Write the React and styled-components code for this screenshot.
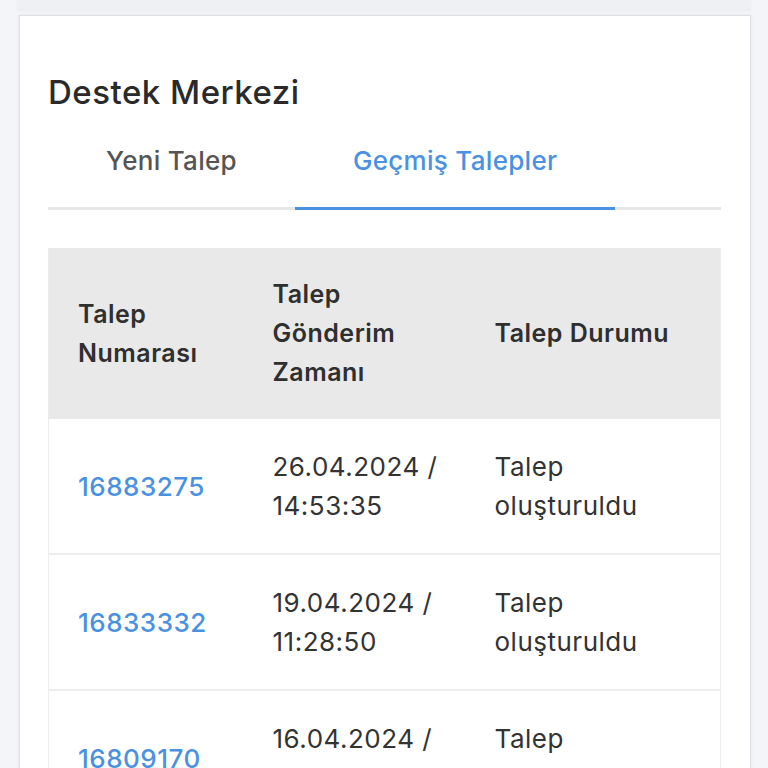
import styled, { createGlobalStyle } from 'styled-components'

const tickets = [
	{ id: '16883275', date: '26.04.2024 /', time: '14:53:35', status: 'Talep', status2: 'oluşturuldu' },
	{ id: '16833332', date: '19.04.2024 /', time: '11:28:50', status: 'Talep', status2: 'oluşturuldu' },
	{ id: '16809170', date: '16.04.2024 /', time: '10:12:44', status: 'Talep', status2: 'oluşturuldu' },
]

const App = () => {
	return (
		<Page>
			<GlobalStyle />
			<PrevCard />
			<Card>
				<Title>Destek Merkezi</Title>
				<Tabs>
					<Tab>Yeni Talep</Tab>
					<Tab $active>Geçmiş Talepler</Tab>
				</Tabs>
				<Table>
					<colgroup>
						<col style={{ width: 195 }} />
						<col style={{ width: 222 }} />
						<col />
					</colgroup>
					<thead>
						<tr>
							<HeadCell>
								Talep
								<br />
								Numarası
							</HeadCell>
							<HeadCell>
								Talep
								<br />
								Gönderim
								<br />
								Zamanı
							</HeadCell>
							<HeadCell>Talep Durumu</HeadCell>
						</tr>
					</thead>
					<tbody>
						{tickets.map((t) => (
							<Row key={t.id}>
								<Cell>
									<TicketLink>{t.id}</TicketLink>
								</Cell>
								<Cell>
									{t.date}
									<br />
									{t.time}
								</Cell>
								<Cell>
									{t.status}
									<br />
									{t.status2}
								</Cell>
							</Row>
						))}
					</tbody>
				</Table>
			</Card>
		</Page>
	)
}

export default App

const GlobalStyle = createGlobalStyle`
	html, body {
		margin: 0;
		padding: 0;
		background: #f3f5f9;
		font-family: Inter, "Noto Sans", sans-serif;
	}
	body {
		height: 768px;
		overflow: hidden;
	}
`

const Page = styled.div`
	display: flex;
	flex-direction: column;
	gap: 6px;
	padding: 0 17px 0 19px;
`

const PrevCard = styled.div`
	height: 9px;
	margin: 0 0 0 -2px;
	background: #eef0f4;
	box-shadow: 0 2px 3px rgba(0, 0, 0, 0.04);
`

const Card = styled.div`
	background: #fff;
	border: 1.5px solid #dedfe4;
	box-shadow: 0 0 4px rgba(0, 0, 0, 0.06);
	padding: 60px 29px 0 28px;
	min-height: 800px;
`

const Title = styled.h1`
	margin: 0;
	font-size: 33px;
	font-weight: 500;
	line-height: 32px;
	color: #2a2a2a;
	letter-spacing: 0.5px;
`

const Tabs = styled.div`
	display: flex;
	margin-top: 25px;
	border-bottom: 3px solid #e7e7e7;
`

const Tab = styled.div`
	padding: 12px 58px 30px 58px;
	margin-bottom: -3px;
	font-size: 26px;
	font-weight: 500;
	line-height: 32px;
	letter-spacing: 0.3px;
	color: ${(p) => (p.$active ? '#4a92e1' : '#555')};
	border-bottom: 3px solid ${(p) => (p.$active ? '#4a92e1' : 'transparent')};
`

const Table = styled.table`
	width: 100%;
	margin-top: 38px;
	border-collapse: collapse;
	table-layout: fixed;
	border-left: 1px solid #ececec;
	border-right: 1px solid #ececec;
`

const HeadCell = styled.th`
	background: #e9e9e9;
	padding: 27px 8px 27px 29px;
	text-align: left;
	vertical-align: middle;
	font-size: 25px;
	font-weight: 600;
	line-height: 39px;
	letter-spacing: 0.5px;
	color: #2f2f2f;
`

const Row = styled.tr`
	border-bottom: 2px solid #ececec;
`

const Cell = styled.td`
	padding: 28px 8px 28px 29px;
	vertical-align: middle;
	font-size: 26px;
	line-height: 39px;
	letter-spacing: 0.5px;
	color: #333;
`

const TicketLink = styled.span`
	color: #4a92e1;
	font-weight: 500;
`
